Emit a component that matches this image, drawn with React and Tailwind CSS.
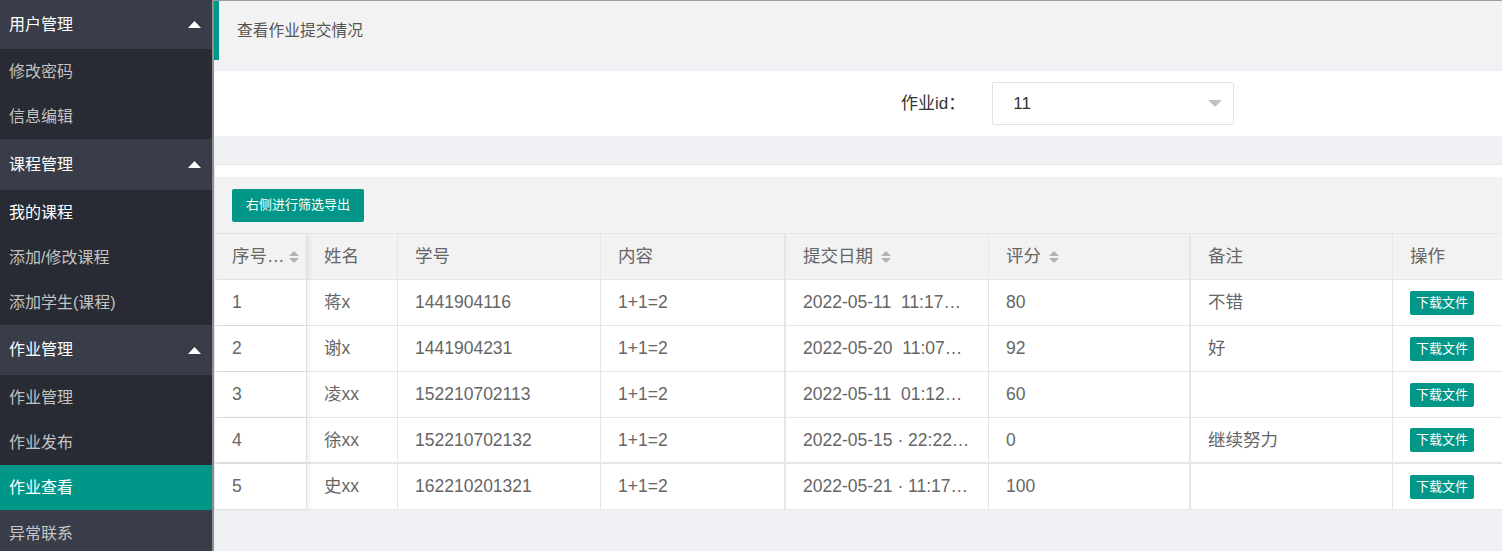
import React from "react";

const FONT = { fontFamily: '"Liberation Sans", "Noto Sans CJK SC", sans-serif' };

function Caret() {
  return (
    <svg width="13" height="7" viewBox="0 0 13 7" className="mr-[11px]">
      <path d="M0 7 L6.5 0 L13 7 Z" fill="#fff" />
    </svg>
  );
}

function SortIcon({ first }) {
  return (
    <svg width="12" height="14" viewBox="0 0 12 14" className={`${first ? "ml-[3px]" : "ml-[7px]"} shrink-0`}>
      <path d="M1 6 L6 1 L11 6 Z" fill="#b2b2b2" />
      <path d="M1 8 L6 13 L11 8 Z" fill="#b2b2b2" />
    </svg>
  );
}

const navItems = [
  { t: "用户管理", type: "head", h: "h-[49px]" },
  { t: "修改密码", type: "sub" },
  { t: "信息编辑", type: "sub" },
  { t: "课程管理", type: "head", h: "h-[51px]" },
  { t: "我的课程", type: "sub", white: true },
  { t: "添加/修改课程", type: "sub" },
  { t: "添加学生(课程)", type: "sub" },
  { t: "作业管理", type: "head", h: "h-[50px]" },
  { t: "作业管理", type: "sub" },
  { t: "作业发布", type: "sub" },
  { t: "作业查看", type: "active" },
  { t: "异常联系", type: "plain" },
];

const rows = [
  ["1", "蒋x", "1441904116", "1+1=2", "2022-05-11\u00a0\u00a011:17…", "80", "不错"],
  ["2", "谢x", "1441904231", "1+1=2", "2022-05-20\u00a0\u00a011:07…", "92", "好"],
  ["3", "凌xx", "152210702113", "1+1=2", "2022-05-11\u00a0\u00a001:12…", "60", ""],
  ["4", "徐xx", "152210702132", "1+1=2", "2022-05-15 · 22:22…", "0", "继续努力"],
  ["5", "史xx", "162210201321", "1+1=2", "2022-05-21 · 11:17…", "100", ""],
];

const cols = "grid grid-cols-[92px_91px_203px_185px_203px_202px_202px_110px]";

export default function App() {
  return (
    <div className="flex w-[1502px] h-[551px] overflow-hidden bg-[#f0f1f5]" style={FONT}>
      {/* Sidebar */}
      <div className="w-[212px] shrink-0 flex flex-col bg-[#282b33] text-[16px]">
        {navItems.map((n, i) => {
          if (n.type === "head")
            return (
              <div key={i} className={`${n.h} flex items-center justify-between pl-[9px] bg-[#393d49] text-white`}>
                <span>{n.t}</span>
                <Caret />
              </div>
            );
          if (n.type === "active")
            return (
              <div key={i} className="h-[45px] flex items-center pl-[9px] bg-[#009688] text-white">
                {n.t}
              </div>
            );
          if (n.type === "plain")
            return (
              <div key={i} className="h-[41px] flex items-center pl-[9px] pt-[6px] bg-[#393d49] text-[#c8c8c8]">
                {n.t}
              </div>
            );
          return (
            <div key={i} className={`h-[45px] flex items-center pl-[9px] ${n.white ? "text-white" : "text-[#c2c2c2]"}`}>
              {n.t}
            </div>
          );
        })}
      </div>
      <div className="w-[2px] shrink-0 bg-[#8f8f8f]" />

      {/* Main */}
      <div className="flex-1 flex flex-col border-t border-[#9a9a9a]">
        <div className="h-[59px] bg-[#f2f2f2] border-l-[5px] border-[#009688] flex items-center pl-[18px] text-[15.75px] text-[#555]">
          查看作业提交情况
        </div>
        <div className="h-[11px]" />
        <div className="h-[65px] bg-white flex items-center pl-[687px]">
          <span className="text-[17px] text-[#333]">作业id：</span>
          <div className="ml-[27px] w-[242px] h-[43px] border border-[#e2e2e2] rounded-[2px] flex items-center justify-between pl-[20px] pr-[11px]">
            <span className="text-[17px] text-[#333]">11</span>
            <svg width="14" height="7" viewBox="0 0 14 7">
              <path d="M0 0 L14 0 L7 7 Z" fill="#c2c2c2" />
            </svg>
          </div>
        </div>
        <div className="h-[28px]" />

        <div className="flex flex-col border-t border-l border-[#e6e6e6]">
          <div className="h-[12px] bg-white" />
          <div className="h-[57px] bg-[#f2f2f2] border-b border-[#e6e6e6] flex items-center pl-[17px]">
            <button className="h-[33px] px-[14px] bg-[#009688] rounded-[2px] text-white text-[13px]">
              右侧进行筛选导出
            </button>
          </div>

          {/* header */}
          <div className={`${cols} h-[46px] bg-[#f2f2f2] text-[17.5px] text-[#666]`}>
            {["序号…", "姓名", "学号", "内容", "提交日期", "评分", "备注", "操作"].map((h, i) => (
              <div
                key={i}
                className={`flex items-center pl-[17px] border-b border-[#e6e6e6] ${
                  i === 0 ? "border-r border-r-[#e0e0e0] shadow-[3px_0_4px_rgba(0,0,0,0.06)]" : i === 3 || i === 5 ? "border-r-2 border-r-[#e6e6e6]" : i === 7 ? "" : "border-r border-r-[#e6e6e6]"
                }`}
              >
                <span className="whitespace-nowrap">{h}</span>
                {(i === 0 || i === 4 || i === 5) && <SortIcon first={i === 0} />}
              </div>
            ))}
          </div>

          {rows.map((r, ri) => (
            <div
              key={ri}
              className={`${cols} h-[46px] bg-white text-[17.5px] text-[#666] ${ri === 3 ? "border-b-2" : "border-b"} border-[#e6e6e6]`}
            >
              {r.map((c, ci) => (
                <div
                  key={ci}
                  className={`flex items-center pl-[17px] min-w-0 ${
                    ci === 0 ? "border-r border-r-[#e0e0e0] shadow-[3px_0_4px_rgba(0,0,0,0.06)]" : ci === 3 || ci === 5 ? "border-r-2 border-r-[#e6e6e6]" : "border-r border-r-[#e6e6e6]"
                  } ${ci === 4 ? "pr-[12px]" : ""}`}
                >
                  <span className="whitespace-nowrap">{c}</span>
                </div>
              ))}
              <div className="flex items-center pl-[17px]">
                <span className="h-[24px] px-[6px] bg-[#009688] rounded-[2px] text-white text-[13px] flex items-center">
                  下载文件
                </span>
              </div>
            </div>
          ))}
        </div>
      </div>
    </div>
  );
}
